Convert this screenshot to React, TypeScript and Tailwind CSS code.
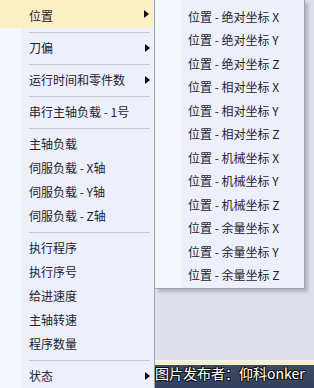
import React from "react";

type Entry = { label: string; arrow?: boolean; active?: boolean } | "sep";

const mainItems: Entry[] = [
  { label: "位置", arrow: true, active: true },
  "sep",
  { label: "刀偏", arrow: true },
  "sep",
  { label: "运行时间和零件数", arrow: true },
  "sep",
  { label: "串行主轴负载 - 1号" },
  "sep",
  { label: "主轴负载" },
  { label: "伺服负载 - X轴" },
  { label: "伺服负载 - Y轴" },
  { label: "伺服负载 - Z轴" },
  "sep",
  { label: "执行程序" },
  { label: "执行序号" },
  { label: "给进速度" },
  { label: "主轴转速" },
  { label: "程序数量" },
  "sep",
  { label: "状态", arrow: true },
];

const subItems = [
  "位置 - 绝对坐标 X",
  "位置 - 绝对坐标 Y",
  "位置 - 绝对坐标 Z",
  "位置 - 相对坐标 X",
  "位置 - 相对坐标 Y",
  "位置 - 相对坐标 Z",
  "位置 - 机械坐标 X",
  "位置 - 机械坐标 Y",
  "位置 - 机械坐标 Z",
  "位置 - 余量坐标 X",
  "位置 - 余量坐标 Y",
  "位置 - 余量坐标 Z",
];

function Arrow() {
  return (
    <svg width="5" height="8" viewBox="0 0 5 8" className="absolute right-[4px] top-1/2 -translate-y-1/2">
      <path d="M0 0L5 4L0 8z" fill="#0c0c0c" />
    </svg>
  );
}

export default function App() {
  return (
    <div
      className="relative flex h-[388px] w-[314px] overflow-hidden bg-[#dde0e9] text-[12px] text-[#1d2230]"
      style={{ fontFamily: '"Noto Sans CJK SC", "Noto Sans", sans-serif' }}
    >
      {/* main menu */}
      <div className="flex h-full w-[155px] shrink-0 flex-col border-r border-[#9ea5b4] bg-[linear-gradient(to_right,#f6f7fc_22px,#edf0fa_22px)]">
        {mainItems.map((it, i) =>
          it === "sep" ? (
            <div key={i} className="flex h-[8px] items-center pl-[29px] pr-[4px]">
              <div className="h-px w-full bg-[#c6cad4]" />
            </div>
          ) : (
            <div
              key={i}
              className={`relative flex items-center pl-[29px] ${
                it.active ? "mr-[1px] h-[28px] bg-[#fcefc3] pt-[4px]" : "h-[24px]"
              }`}
            >
              <span className="leading-none">{it.label}</span>
              {it.arrow && <Arrow />}
            </div>
          )
        )}
      </div>

      {/* right side: submenu + watermark */}
      <div className="flex h-full flex-1 flex-col">
        <div className="flex">
          <div className="flex w-[150px] flex-col border-r border-b border-[#a0a5b1] bg-[linear-gradient(to_right,#f6f7fc_26px,#edf0fb_26px)] pt-[5px] pb-[1px] shadow-[3px_3px_3px_rgba(90,96,110,0.35)]">
            {subItems.map((s) => (
              <div key={s} className="flex h-[23.5px] items-center pl-[33px]">
                <span className="leading-none">{s}</span>
              </div>
            ))}
          </div>
        </div>
        <div className="flex-1" />
        <div className="h-px bg-[#f4f5f8]" />
        <div className="relative h-[27px] bg-[linear-gradient(to_bottom,#f6efc8_0px,#f6efc8_4px,#3d4b69_4px,#34415c_100%)]">
          <span
            className="absolute left-0 top-[2px] whitespace-nowrap text-[14px] leading-[20px] text-white [text-shadow:1px_1px_0_#111,-1px_-1px_0_#111,1px_-1px_0_#111,-1px_1px_0_#111]"
            style={{ fontFamily: '"Noto Sans CJK SC", "DejaVu Sans", sans-serif' }}
          >
            图片发布者：仰科onker
          </span>
        </div>
      </div>
    </div>
  );
}
